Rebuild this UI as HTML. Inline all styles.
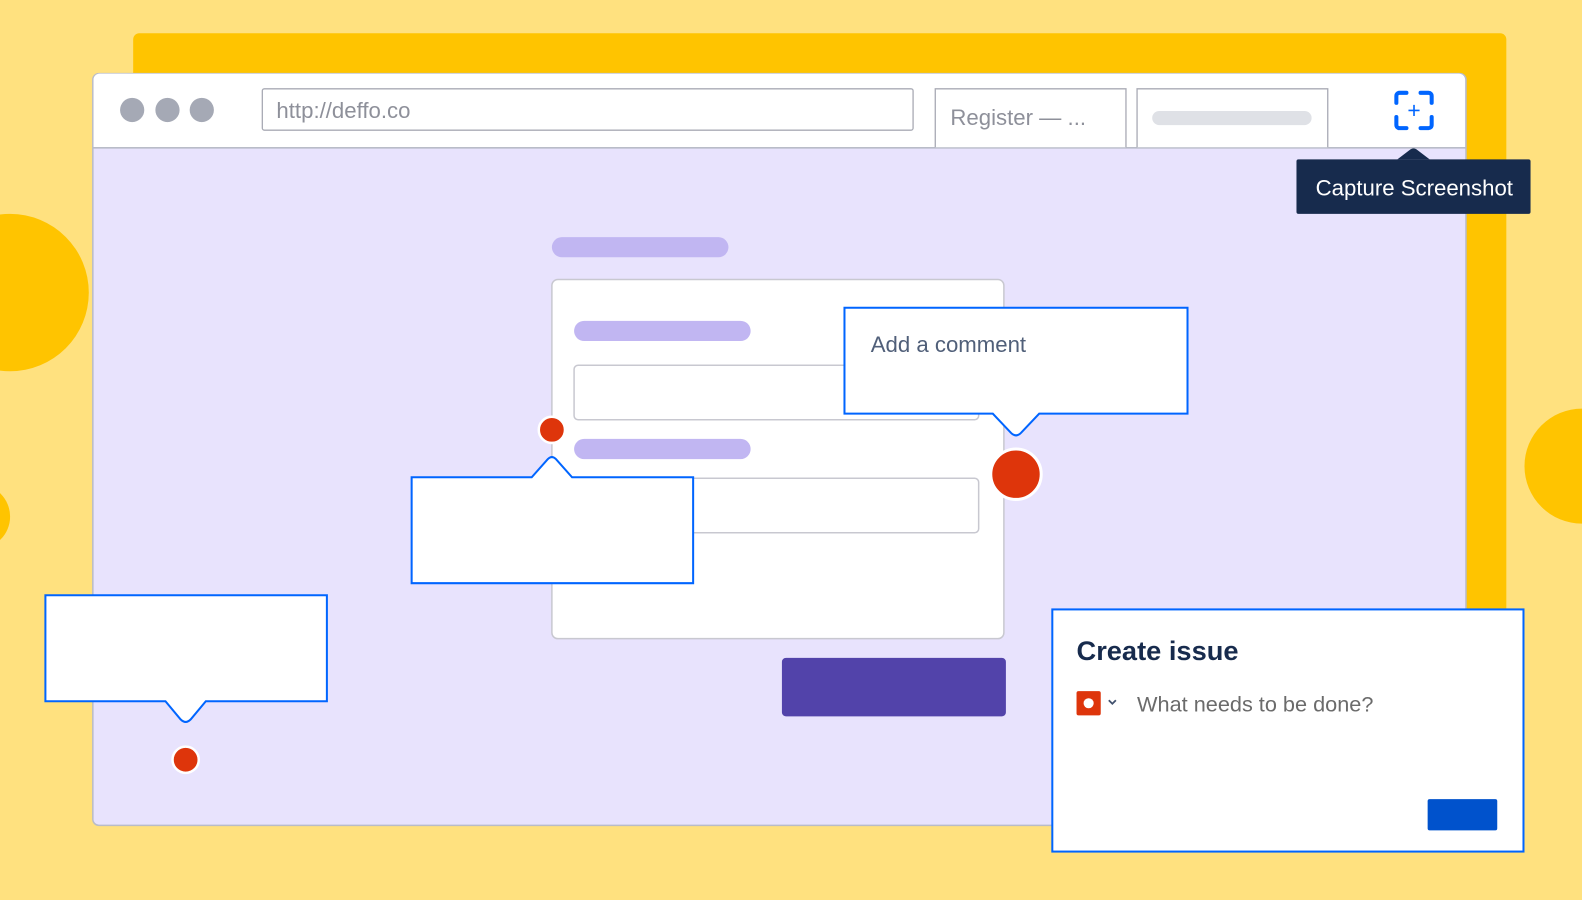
<!DOCTYPE html>
<html><head><meta charset="utf-8"><style>
html,body{margin:0;padding:0;background:#FFE17F;}
svg{display:block;}
text{font-family:"Liberation Sans",sans-serif;}
</style></head><body>
<svg width="1582" height="900" viewBox="0 0 1568 892" preserveAspectRatio="none" xmlns="http://www.w3.org/2000/svg">
<rect width="1568" height="892" fill="#FFE17F"/>
<rect x="132" y="33" width="1361" height="775" rx="6" fill="#FFC400"/>
<circle cx="10" cy="290" r="78" fill="#FFC400"/>
<circle cx="-22" cy="512" r="32" fill="#FFC400"/>
<circle cx="1568" cy="462" r="57" fill="#FFC400"/>
<rect x="92" y="73" width="1361" height="745" rx="6" fill="#E8E3FD" stroke="#B9BCC8" stroke-width="1.5"/>
<path d="M92.75 146 V79 a6 6 0 0 1 6 -6 H1446 a6 6 0 0 1 6 6 V146 Z" fill="#fff"/>
<line x1="92" y1="146.5" x2="1453" y2="146.5" stroke="#B9BCC8" stroke-width="1.5"/>
<circle cx="131" cy="109" r="12" fill="#A5A9B5"/>
<circle cx="166" cy="109" r="12" fill="#A5A9B5"/>
<circle cx="200" cy="109" r="12" fill="#A5A9B5"/>
<rect x="260" y="88" width="645" height="41" rx="2" fill="#fff" stroke="#A9ABB5" stroke-width="1.3"/>
<text x="274" y="117" font-size="22" fill="#8E909A">http://deffo.co</text>
<path d="M927 146 V88 H1116 V146" fill="#fff" stroke="#A9ABB5" stroke-width="1.3"/>
<text x="942" y="124" font-size="22" fill="#8E909A">Register — ...</text>
<path d="M1127 146 V88 H1316 V146" fill="#fff" stroke="#A9ABB5" stroke-width="1.3"/>
<rect x="1142" y="110" width="158" height="14" rx="7" fill="#DFE1E6"/>
<g fill="none" stroke="#0065FF" stroke-width="4" stroke-linecap="round">
<path d="M1384 102 V95 a3 3 0 0 1 3 -3 H1394"/>
<path d="M1408 92 H1416 a3 3 0 0 1 3 3 V102"/>
<path d="M1419 116 V124 a3 3 0 0 1 -3 3 H1408"/>
<path d="M1394 127 H1387 a3 3 0 0 1 -3 -3 V116"/>
</g>
<path d="M1401.5 104 V115 M1396 109.5 H1407" stroke="#0065FF" stroke-width="1.6"/>
<path d="M1385 158 L1398 148 Q1401 146 1404 148 L1417 158 Z" fill="#172B4D"/>
<rect x="1285" y="158" width="232" height="54" rx="2" fill="#172B4D"/>
<text x="1304" y="194" font-size="22" fill="#fff">Capture Screenshot</text>
<rect x="547" y="235" width="175" height="20" rx="10" fill="#C1B6F2"/>
<rect x="547" y="277" width="448" height="356" rx="6" fill="#fff" stroke="#C8C8D0" stroke-width="1.5"/>
<rect x="569" y="318" width="175" height="20" rx="10" fill="#C1B6F2"/>
<rect x="569" y="362" width="401" height="54" rx="4" fill="#fff" stroke="#C8C8D0" stroke-width="1.5"/>
<rect x="569" y="435" width="175" height="20" rx="10" fill="#C1B6F2"/>
<rect x="569" y="474" width="401" height="54" rx="4" fill="#fff" stroke="#C8C8D0" stroke-width="1.5"/>
<rect x="775" y="652" width="222" height="58" rx="4" fill="#5243AA"/>
<path d="M837 305 H1177 V410 H1030 L1012 429 Q1007 434 1002 429 L984 410 H837 Z" fill="#fff" stroke="#0065FF" stroke-width="2"/>
<text x="863" y="349" font-size="22" fill="#505F79">Add a comment</text>
<circle cx="1007" cy="470" r="25" fill="#DE350B" stroke="#fff" stroke-width="3"/>
<path d="M408 473 H527 L543 455 Q547 451 551 455 L567 473 H687 V578 H408 Z" fill="#fff" stroke="#0065FF" stroke-width="2"/>
<circle cx="547" cy="426" r="13" fill="#DE350B" stroke="#fff" stroke-width="2.5"/>
<path d="M45 590 H324 V695 H204 L189 713 Q184 718 179 713 L164 695 H45 Z" fill="#fff" stroke="#0065FF" stroke-width="2"/>
<circle cx="184" cy="753" r="13" fill="#DE350B" stroke="#fff" stroke-width="2.5"/>
<rect x="1043" y="604" width="467" height="240" fill="#fff" stroke="#0065FF" stroke-width="2"/>
<text x="1067" y="654" font-size="27" font-weight="bold" fill="#172B4D">Create issue</text>
<rect x="1067" y="685" width="24" height="24" rx="2" fill="#DE350B"/>
<circle cx="1079" cy="697" r="5" fill="#fff"/>
<path d="M1099 694 L1102.5 697.5 L1106 694" fill="none" stroke="#42526E" stroke-width="1.8"/>
<text x="1127" y="705" font-size="21.5" fill="#6B6B6B">What needs to be done?</text>
<rect x="1415" y="792" width="69" height="31" rx="2" fill="#0052CC"/>
</svg>
</body></html>
